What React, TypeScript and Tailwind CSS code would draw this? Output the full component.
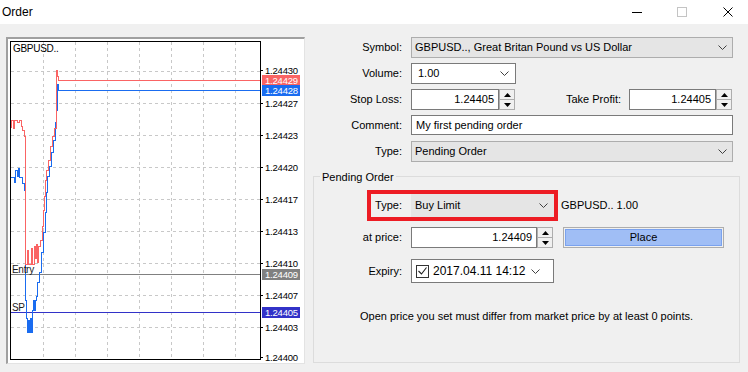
import React from "react";

const FONT = { fontFamily: '"Liberation Sans", Arial, sans-serif' };

const hGrid = [71, 103, 135, 167, 199, 231, 263, 295, 327];
const vGrid = [43, 75, 107, 139, 171, 203, 235];
const axis: [number, string][] = [
  [70, "1.24430"],
  [103, "1.24427"],
  [135, "1.24423"],
  [167, "1.24420"],
  [199, "1.24417"],
  [231, "1.24413"],
  [263, "1.24410"],
  [295, "1.24407"],
  [327, "1.24403"],
  [357, "1.24400"],
];
const tags: [number, string, string][] = [
  [80, "1.24429", "#fa6464"],
  [90, "1.24428", "#1a6cf0"],
  [274, "1.24409", "#808080"],
  [312, "1.24405", "#3232c8"],
];

const redPath =
  "M11,128 V120 H13 V128 H14 V120 H17 V122 H19 V120 H21 V126 H22 V130 H24 V136 H25 V264 H27 V250 H28 V264 H31 V248 H32 V264 H34 V246 H35 V258 H36 V244 H37 V262 H38 V246 H40 V240 H42 V226 H43 V210 H44 V196 H45 V180 H46 V170 H48 V160 H50 V146 H52 V136 H54 V128 H56 V70 H57 V76 H58 V80 H260";
const bluePath =
  "M11,177 H14 V182 H15 V170 H17 V176 H18 V168 H19 V177 H22 V183 H24 V190 H25 V300 H26 V318 H27 V332 H28 V320 H29 V332 H30 V318 H31 V332 H32 V310 H33 V300 H34 V310 H35 V300 H36 V296 H37 V282 H39 V272 H41 V252 H43 V232 H45 V212 H46 V192 H47 V176 H49 V166 H51 V152 H53 V140 H55 V122 H56 V110 H57 V84 H58 V90 H260";

function Chart() {
  return (
    <svg width={296} height={324} viewBox="8 39 296 324" shapeRendering="crispEdges" style={FONT}>
      <rect x={8} y={39} width={296} height={324} fill="#ffffff" />
      {hGrid.map((y) => (
        <line key={"h" + y} x1={11} x2={260} y1={y + 0.5} y2={y + 0.5} stroke="#c8c8c8" strokeDasharray="3 3" />
      ))}
      {vGrid.map((x) => (
        <line key={"v" + x} x1={x + 0.5} x2={x + 0.5} y1={42} y2={360} stroke="#c8c8c8" strokeDasharray="3 3" />
      ))}
      <line x1={11} x2={260} y1={274.5} y2={274.5} stroke="#808080" />
      <line x1={11} x2={260} y1={312.5} y2={312.5} stroke="#3232c8" />
      <path d={bluePath} fill="none" stroke="#1a6cf0" strokeWidth={1} />
      <path d={redPath} fill="none" stroke="#fa6464" strokeWidth={1} />
      <rect x={10.5} y={41.5} width={250} height={318} fill="none" stroke="#000000" />
      <text x={13} y={52} fontSize={10} letterSpacing={-0.3} fill="#000">GBPUSD..</text>
      <text x={12} y={273} fontSize={10} letterSpacing={-0.3} fill="#1a1a1a">Entry</text>
      <text x={12} y={311} fontSize={10} letterSpacing={-0.3} fill="#1a1a1a">SP</text>
      {axis.map(([y, t]) => (
        <g key={t}>
          <line x1={260} x2={263} y1={Math.round(y) + 0.5} y2={Math.round(y) + 0.5} stroke="#000" />
          <text x={265} y={y + 4} fontSize={9.5} letterSpacing={-0.2} fill="#000">{t}</text>
        </g>
      ))}
      {tags.map(([y, t, c]) => (
        <g key={t}>
          <rect x={262} y={y - 5} width={38} height={11} fill={c} />
          <text x={265} y={y + 4} fontSize={9.5} letterSpacing={-0.2} fill="#ffffff">{t}</text>
        </g>
      ))}
    </svg>
  );
}

function Chevron() {
  return (
    <svg width={9} height={5} viewBox="0 0 9 5" className="shrink-0">
      <polyline points="0.5,0.5 4.5,4.5 8.5,0.5" fill="none" stroke="#404040" strokeWidth={1} />
    </svg>
  );
}

function Spinner() {
  return (
    <div className="flex h-full w-[16px] flex-col border border-[#adadad] bg-[#f0f0f0]">
      <div className="flex flex-1 items-center justify-center border-b border-[#adadad]">
        <svg width={7} height={4} viewBox="0 0 7 4">
          <polygon points="0,4 3.5,0 7,4" fill="#000" />
        </svg>
      </div>
      <div className="flex flex-1 items-center justify-center">
        <svg width={7} height={4} viewBox="0 0 7 4">
          <polygon points="0,0 3.5,4 7,0" fill="#000" />
        </svg>
      </div>
    </div>
  );
}

function GrayCombo({ text, className }: { text: string; className: string }) {
  return (
    <div className={`flex items-center justify-between border border-[#adadad] bg-[#e5e5e5] pl-[3px] pr-[5px] ${className}`}>
      <span>{text}</span>
      <Chevron />
    </div>
  );
}

export default function App() {
  return (
    <div className="flex h-[372px] w-[748px] flex-col overflow-hidden bg-[#f0f0f0] text-[11px] text-black" style={FONT}>
      <div className="flex h-[24px] items-center justify-between bg-white">
        <span className="pl-[2px] text-[12px]">Order</span>
        <div className="flex items-center pr-[15px]">
          <div className="h-px w-[10px] bg-black" />
          <div className="ml-[35px] h-[10px] w-[10px] border border-[#c4c4c4]" />
          <svg width={10} height={10} viewBox="0 0 10 10" className="ml-[36px]">
            <path d="M0.5,0.5 L9.5,9.5 M9.5,0.5 L0.5,9.5" stroke="#000" strokeWidth={1} />
          </svg>
        </div>
      </div>

      <div className="flex flex-1">
        <div className="ml-[6px] mt-[13px] h-[327px] w-[299px] border-l-2 border-t-2 border-b border-r border-l-[#a0a0a0] border-t-[#a0a0a0] border-b-[#e3e3e3] border-r-[#e3e3e3]">
          <Chart />
        </div>

        <div className="flex w-[443px] flex-col">
          <div className="mt-[13px] flex h-[21px] items-center">
            <div className="w-[97px] text-right">Symbol:</div>
            <GrayCombo text="GBPUSD.., Great Britan Pound vs US Dollar" className="ml-[9px] h-full w-[322px]" />
          </div>

          <div className="mt-[5px] flex h-[21px] items-center">
            <div className="w-[97px] text-right">Volume:</div>
            <div className="ml-[9px] flex h-full w-[105px] items-center justify-between border border-[#7a7a7a] bg-white pl-[6px] pr-[6px]">
              <span>1.00</span>
              <Chevron />
            </div>
          </div>

          <div className="mt-[5px] flex h-[21px] items-center">
            <div className="w-[97px] text-right">Stop Loss:</div>
            <div className="ml-[9px] flex h-full w-[88px] items-center justify-end border border-[#7a7a7a] bg-white pr-[4px]">1.24405</div>
            <Spinner />
            <div className="w-[106px] text-right">Take Profit:</div>
            <div className="ml-[8px] flex h-full w-[87px] items-center justify-end border border-[#7a7a7a] bg-white pr-[4px]">1.24405</div>
            <Spinner />
          </div>

          <div className="mt-[5px] flex h-[20px] items-center">
            <div className="w-[97px] text-right">Comment:</div>
            <div className="ml-[9px] flex h-full w-[322px] items-center border border-[#7a7a7a] bg-white pl-[4px]">My first pending order</div>
          </div>

          <div className="mt-[6px] flex h-[21px] items-center">
            <div className="w-[97px] text-right">Type:</div>
            <GrayCombo text="Pending Order" className="ml-[9px] h-full w-[322px]" />
          </div>

          <div className="relative ml-[8px] mt-[14px] flex h-[187px] w-[427px] flex-col border border-[#dcdcdc]">
            <span className="absolute left-[6px] top-[-8px] bg-[#f0f0f0] px-[2px]">Pending Order</span>

            <div className="mt-[13px] flex items-center">
              <div className="ml-[53px] flex h-[31px] w-[191px] items-center border-4 border-[#ed1c24]">
                <div className="w-[31px] text-right">Type:</div>
                <GrayCombo text="Buy Limit" className="ml-[9px] h-full w-[143px] border-0 pl-[4px] pr-[6px]" />
              </div>
              <span className="ml-[3px]">GBPUSD.. 1.00</span>
            </div>

            <div className="mt-[6px] flex h-[21px] items-center">
              <div className="w-[88px] text-right">at price:</div>
              <div className="ml-[9px] flex h-full w-[126px] items-center justify-end border border-[#7a7a7a] bg-white pr-[4px]">1.24409</div>
              <Spinner />
              <div className="ml-[10px] flex h-full w-[161px] border border-[#adadad] bg-[#f0f0f0] p-px">
                <div className="flex flex-1 items-center justify-center border border-[#7aa2ee] bg-[#a0bef5]">Place</div>
              </div>
            </div>

            <div className="mt-[11px] flex h-[24px] items-center">
              <div className="w-[88px] text-right">Expiry:</div>
              <div className="ml-[9px] flex h-full w-[143px] items-center border border-[#7a7a7a] bg-white pl-[4px] pr-[13px]">
                <div className="flex h-[13px] w-[13px] shrink-0 items-center justify-center border border-[#333333] bg-white">
                  <svg width={9} height={8} viewBox="0 0 9 8">
                    <polyline points="0.5,4 3.5,7 8.5,0.5" fill="none" stroke="#202020" strokeWidth={1.1} />
                  </svg>
                </div>
                <span className="ml-[4px] whitespace-nowrap text-[12px]">2017.04.11 14:12</span>
                <div className="ml-auto">
                  <Chevron />
                </div>
              </div>
            </div>

            <div className="mt-[25px] text-center">Open price you set must differ from market price by at least 0 points.</div>
          </div>
        </div>
      </div>
    </div>
  );
}
